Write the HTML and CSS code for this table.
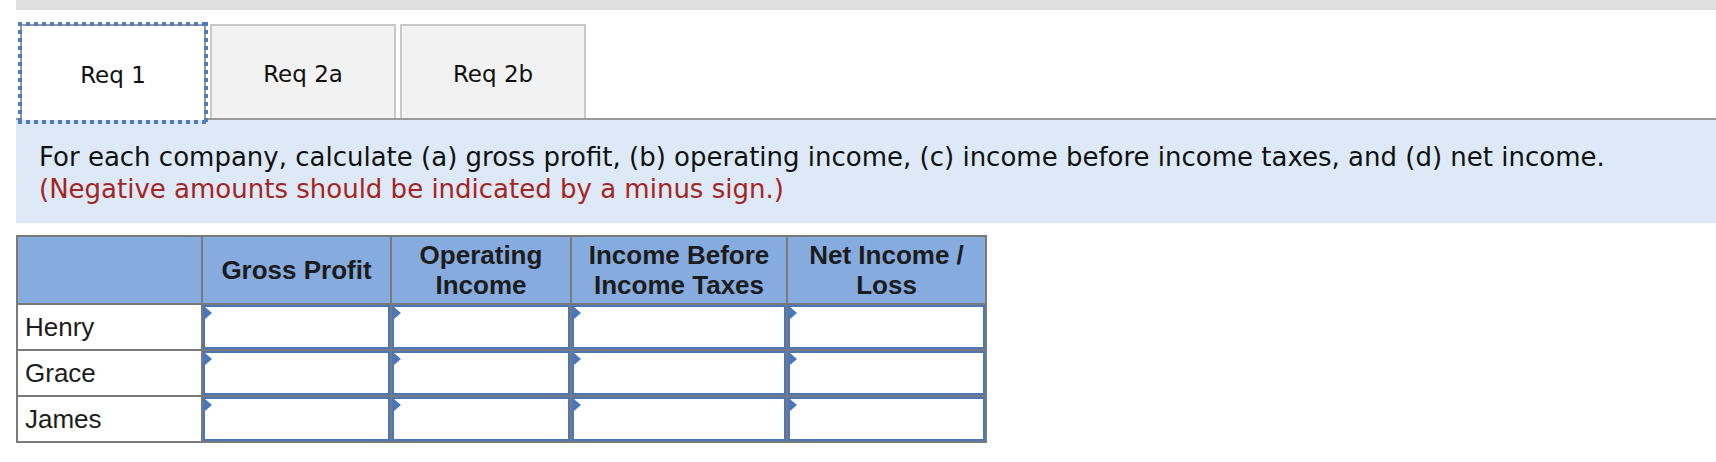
FILE: index.html
```html
<!DOCTYPE html>
<html lang="en">
<head>
<meta charset="utf-8">
<title>Req 1</title>
<link rel="stylesheet" href="styles.css">
</head>
<body>
<div class="page">
  <div class="topbar"></div>
  <div class="tabs">
    <button class="tab active">Req 1</button>
    <button class="tab">Req 2a</button>
    <button class="tab">Req 2b</button>
  </div>
  <div class="prompt">
    <p>For each company, calculate (a) gross profit, (b) operating income, (c) income before income taxes, and (d) net income.</p>
    <p class="note">(Negative amounts should be indicated by a minus sign.)</p>
  </div>
  <table class="grid">
    <colgroup>
      <col class="c-label">
      <col class="c-gross">
      <col class="c-oper">
      <col class="c-ibit">
      <col class="c-net">
    </colgroup>
    <thead>
      <tr>
        <th></th>
        <th>Gross Profit</th>
        <th>Operating<br>Income</th>
        <th>Income Before<br>Income Taxes</th>
        <th>Net Income /<br>Loss</th>
      </tr>
    </thead>
    <tbody>
      <tr>
        <td class="label">Henry</td>
        <td><div class="cell"><input type="text"></div></td>
        <td><div class="cell"><input type="text"></div></td>
        <td><div class="cell"><input type="text"></div></td>
        <td><div class="cell"><input type="text"></div></td>
      </tr>
      <tr>
        <td class="label">Grace</td>
        <td><div class="cell"><input type="text"></div></td>
        <td><div class="cell"><input type="text"></div></td>
        <td><div class="cell"><input type="text"></div></td>
        <td><div class="cell"><input type="text"></div></td>
      </tr>
      <tr>
        <td class="label">James</td>
        <td><div class="cell"><input type="text"></div></td>
        <td><div class="cell"><input type="text"></div></td>
        <td><div class="cell"><input type="text"></div></td>
        <td><div class="cell"><input type="text"></div></td>
      </tr>
    </tbody>
  </table>
</div>
</body>
</html>
```

FILE: styles.css
```css
html, body {
  margin: 0;
  padding: 0;
  background: #ffffff;
}

.page {
  padding-left: 16px;
}

.topbar {
  height: 10px;
  background: #e0e0e0;
}

.tabs {
  display: flex;
  align-items: flex-start;
  gap: 4px;
  padding-left: 4px;
  margin-top: 14px;
  border-bottom: 2px solid #999999;
}

.tab {
  box-sizing: border-box;
  width: 186px;
  height: 94px;
  margin: 0;
  padding: 4px 0 0 0;
  border: 2px solid #c8c8c8;
  border-bottom: 0;
  background: #f2f2f2;
  font: 23px "DejaVu Sans", Verdana, sans-serif;
  color: #111111;
  cursor: pointer;
}

.tab.active {
  position: relative;
  z-index: 1;
  height: 96px;
  margin-bottom: -2px;
  background: #ffffff;
  border-color: #9a9a9a;
}

.tab.active::after {
  content: "";
  position: absolute;
  top: -4px;
  left: -4px;
  right: -4px;
  bottom: -4px;
  pointer-events: none;
  background:
    repeating-linear-gradient(to right, #4f7bc4 0 4px, transparent 4px 8px) top left / 100% 4px no-repeat,
    repeating-linear-gradient(to right, #4f7bc4 0 4px, transparent 4px 8px) bottom left / 100% 4px no-repeat,
    repeating-linear-gradient(to bottom, #4f7bc4 0 4px, transparent 4px 8px) top left / 4px 100% no-repeat,
    repeating-linear-gradient(to bottom, #4f7bc4 0 4px, transparent 4px 8px) top right / 4px 100% no-repeat;
}

.prompt {
  background: #dde9f6;
  padding: 21px 8px 18px 23px;
  font: 26px/32px "DejaVu Sans", Verdana, sans-serif;
  color: #111111;
}

.prompt p {
  margin: 0;
  white-space: nowrap;
}

.prompt .note {
  color: #a4251f;
}

.grid {
  margin-top: 12px;
  width: 969px;
  table-layout: fixed;
  border-collapse: collapse;
  border: 2px solid #7a7a7a;
  font-family: "Liberation Sans", Arial, sans-serif;
  color: #1c1c1c;
}

.c-label { width: 185px; }
.c-gross { width: 189px; }
.c-oper { width: 180px; }
.c-ibit { width: 216px; }
.c-net { width: 199px; }

.grid th,
.grid td {
  border: 2px solid #7a7a7a;
  padding: 0;
}

.grid th {
  height: 66px;
  background: #86abdf;
  font-size: 26px;
  line-height: 30px;
  font-weight: bold;
  text-align: center;
  vertical-align: middle;
}

.grid td.label {
  height: 44px;
  padding-left: 7px;
  font-size: 26px;
  background: #ffffff;
  vertical-align: middle;
}

.cell {
  position: relative;
  height: 44px;
}

.cell input {
  display: block;
  box-sizing: border-box;
  width: 100%;
  height: 100%;
  margin: 0;
  padding: 0 8px;
  border: 2px solid #4a77bb;
  background: #ffffff;
  font: 26px "Liberation Sans", Arial, sans-serif;
  outline: none;
}

.cell::before {
  content: "";
  position: absolute;
  left: 2px;
  top: 2px;
  width: 0;
  height: 0;
  border-left: 7px solid #4a77bb;
  border-top: 6px solid transparent;
  border-bottom: 6px solid transparent;
}
```
